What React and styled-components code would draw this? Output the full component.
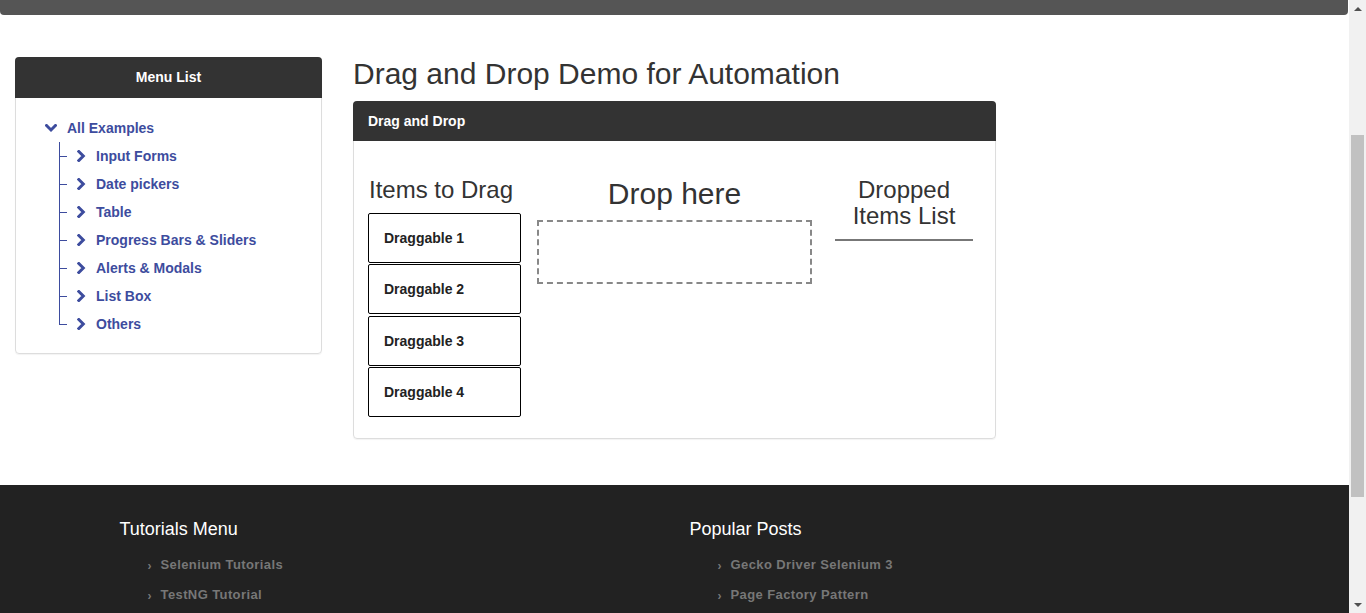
import React, { useLayoutEffect, useRef } from "react";
import styled, { createGlobalStyle } from "styled-components";

const Global = createGlobalStyle`
  html, body { margin: 0; padding: 0; }
  body { font-family: "Liberation Sans", Arial, sans-serif; color: #333; background: #fff; }
  * { box-sizing: border-box; }
`;

const Window = styled.div`
  display: flex;
  height: 100vh;
  overflow: hidden;
`;

const Scroller = styled.div`
  flex: 1;
  min-width: 0;
  height: 100%;
  overflow-y: scroll;
  overflow-x: hidden;
  scrollbar-width: none;
  &::-webkit-scrollbar { display: none; }
`;

const ScrollBar = styled.div`
  width: 17px;
  flex: none;
  height: 100%;
  background: #f1f1f1;
  display: flex;
  flex-direction: column;
`;

const ScrollButton = styled.div`
  height: 17px;
  flex: none;
  display: flex;
  align-items: center;
  justify-content: center;
  &::after {
    content: "";
    width: 0;
    height: 0;
    border-left: 4px solid transparent;
    border-right: 4px solid transparent;
    ${(p) =>
      p.$down
        ? "border-top: 4px solid #505050;"
        : "border-bottom: 4px solid #505050;"}
  }
`;

const ScrollTrack = styled.div`
  flex: 1;
  padding: 118px 2px 0;
`;

const ScrollThumb = styled.div`
  height: 362px;
  background: #c1c1c1;
`;

const SiteHeader = styled.header`
  height: 165px;
`;

const Navbar = styled.nav`
  height: 50px;
  background: #555;
  border-radius: 4px;
  margin-right: 1px;
`;

const Main = styled.main`
  height: 470px;
  display: flex;
  align-items: flex-start;
  padding: 42px 15px 0 15px;
  gap: 31px;
`;

const Sidebar = styled.aside`
  width: 307px;
  border: 1px solid #ddd;
  border-radius: 4px;
  box-shadow: 0 1px 1px rgba(0, 0, 0, 0.05);
`;

const PanelHeading = styled.div`
  background: #333;
  color: #fff;
  font-weight: bold;
  font-size: 14px;
  line-height: 20px;
  padding: 10px 15px ${(p) => (p.$center ? 11 : 10)}px 15px;
  margin: -1px -1px 0;
  border-radius: 4px 4px 0 0;
  text-align: ${(p) => (p.$center ? "center" : "left")};
`;

const TreeBody = styled.div`
  padding: 16px 0 15px 29px;
`;

const TreeList = styled.ul`
  list-style: none;
  margin: 0;
  padding: 0;
`;

const TreeRow = styled.div`
  display: flex;
  align-items: center;
  height: 28px;
  gap: 10px;
  color: #3d4c9e;
  font-weight: bold;
  font-size: 14px;
  svg { flex: none; }
`;

const ChildList = styled.ul`
  list-style: none;
  margin: 0 0 0 14px;
  padding: 0;
`;

const ChildItem = styled.li`
  position: relative;
  padding-left: 18px;
  &::before {
    content: "";
    position: absolute;
    left: 0;
    top: 14px;
    width: 8px;
    height: 1px;
    background: #3d4c9e;
  }
  &::after {
    content: "";
    position: absolute;
    left: 0;
    top: 0;
    width: 1px;
    height: ${(p) => (p.$last ? "15px" : "100%")};
    background: #3d4c9e;
  }
`;

const Content = styled.section`
  width: 643px;
`;

const Title = styled.h1`
  margin: 0 0 11px;
  font-size: 30px;
  font-weight: normal;
  line-height: 33px;
  color: #333;
`;

const Panel = styled.div`
  border: 1px solid #ddd;
  border-radius: 4px;
  box-shadow: 0 1px 1px rgba(0, 0, 0, 0.05);
`;

const PanelBody = styled.div`
  display: flex;
  align-items: flex-start;
  padding: 36px 14px 20px 14px;
`;

const Column = styled.div`
  width: ${(p) => p.$w}px;
  margin-left: ${(p) => p.$ml || 0}px;
  display: flex;
  flex-direction: column;
`;

const ColHeading = styled.h3`
  margin: 0 0 10px;
  font-weight: normal;
  font-size: ${(p) => p.$size}px;
  line-height: ${(p) => p.$lh}px;
  text-align: ${(p) => (p.$center ? "center" : "left")};
  padding-left: ${(p) => (p.$center ? 0 : 1)}px;
  color: #333;
`;

const Draggable = styled.div`
  height: 50px;
  margin-bottom: 1.35px;
  border: 1px solid #000;
  border-radius: 2px;
  display: flex;
  align-items: center;
  padding-left: 15px;
  font-weight: bold;
  font-size: 14px;
  color: #222;
`;

const DropZone = styled.div`
  height: 64px;
  border: 2px dashed #888;
`;

const Rule = styled.hr`
  margin: 0;
  border: 0;
  height: 2px;
  background: #777;
`;

const Footer = styled.footer`
  height: 296px;
  background: #222;
  padding-top: 34px;
`;

const FooterInner = styled.div`
  width: 1140px;
  margin: 0 auto;
  display: grid;
  grid-template-columns: 1fr 1fr;
`;

const FooterCol = styled.div`
  padding: 0 15px;
`;

const FooterTitle = styled.h4`
  margin: 0 0 16px;
  font-size: 18px;
  font-weight: normal;
  line-height: 20px;
  color: #fff;
`;

const FooterList = styled.ul`
  list-style: none;
  margin: 0;
  padding: 0 0 0 28px;
`;

const FooterItem = styled.li`
  height: 30px;
  line-height: 20px;
  font-size: 13px;
  letter-spacing: 0.4px;
  font-weight: bold;
  color: #777;
  &::before {
    content: "›";
    display: inline-block;
    width: 13px;
    font-size: 12px;
    position: relative;
    top: 1px;
  }
`;

const ChevronDown = () => (
  <svg width="12" height="9" viewBox="0 0 12 9" aria-hidden="true">
    <polyline
      points="1.5,1.5 6,6 10.5,1.5"
      fill="none"
      stroke="#3d4c9e"
      strokeWidth="3"
      strokeLinecap="square"
    />
  </svg>
);

const ChevronRight = () => (
  <svg width="9" height="12" viewBox="0 0 9 12" aria-hidden="true">
    <polyline
      points="1.8,1.5 6.3,6 1.8,10.5"
      fill="none"
      stroke="#3d4c9e"
      strokeWidth="3"
      strokeLinecap="square"
    />
  </svg>
);

const children = [
  "Input Forms",
  "Date pickers",
  "Table",
  "Progress Bars & Sliders",
  "Alerts & Modals",
  "List Box",
  "Others",
];

export default function App() {
  const ref = useRef(null);
  useLayoutEffect(() => {
    if (ref.current) ref.current.scrollTop = 200;
  }, []);

  return (
    <>
      <Global />
      <Window>
        <Scroller ref={ref}>
          <SiteHeader />
          <Navbar />
          <Main>
            <Sidebar>
              <PanelHeading $center>Menu List</PanelHeading>
              <TreeBody>
                <TreeList>
                  <li>
                    <TreeRow>
                      <ChevronDown />
                      <span>All Examples</span>
                    </TreeRow>
                    <ChildList>
                      {children.map((c, i) => (
                        <ChildItem key={c} $last={i === children.length - 1}>
                          <TreeRow>
                            <ChevronRight />
                            <span>{c}</span>
                          </TreeRow>
                        </ChildItem>
                      ))}
                    </ChildList>
                  </li>
                </TreeList>
              </TreeBody>
            </Sidebar>
            <Content>
              <Title>Drag and Drop Demo for Automation</Title>
              <Panel>
                <PanelHeading>Drag and Drop</PanelHeading>
                <PanelBody>
                  <Column $w={153}>
                    <ColHeading $size={24} $lh={26}>Items to Drag</ColHeading>
                    {[1, 2, 3, 4].map((n) => (
                      <Draggable key={n}>Draggable {n}</Draggable>
                    ))}
                  </Column>
                  <Column $w={275} $ml={16}>
                    <ColHeading $size={30} $lh={33} $center>Drop here</ColHeading>
                    <DropZone />
                  </Column>
                  <Column $w={138} $ml={23}>
                    <ColHeading $size={24} $lh={26} $center>
                      Dropped
                      <br />
                      Items List
                    </ColHeading>
                    <Rule />
                  </Column>
                </PanelBody>
              </Panel>
            </Content>
          </Main>
          <Footer>
            <FooterInner>
              <FooterCol>
                <FooterTitle>Tutorials Menu</FooterTitle>
                <FooterList>
                  <FooterItem>Selenium Tutorials</FooterItem>
                  <FooterItem>TestNG Tutorial</FooterItem>
                  <FooterItem>Java Tutorials</FooterItem>
                  <FooterItem>Selenium Grid</FooterItem>
                </FooterList>
              </FooterCol>
              <FooterCol>
                <FooterTitle>Popular Posts</FooterTitle>
                <FooterList>
                  <FooterItem>Gecko Driver Selenium 3</FooterItem>
                  <FooterItem>Page Factory Pattern</FooterItem>
                  <FooterItem>Handle Alerts</FooterItem>
                  <FooterItem>Upload File</FooterItem>
                </FooterList>
              </FooterCol>
            </FooterInner>
          </Footer>
        </Scroller>
        <ScrollBar>
          <ScrollButton />
          <ScrollTrack>
            <ScrollThumb />
          </ScrollTrack>
          <ScrollButton $down />
        </ScrollBar>
      </Window>
    </>
  );
}
